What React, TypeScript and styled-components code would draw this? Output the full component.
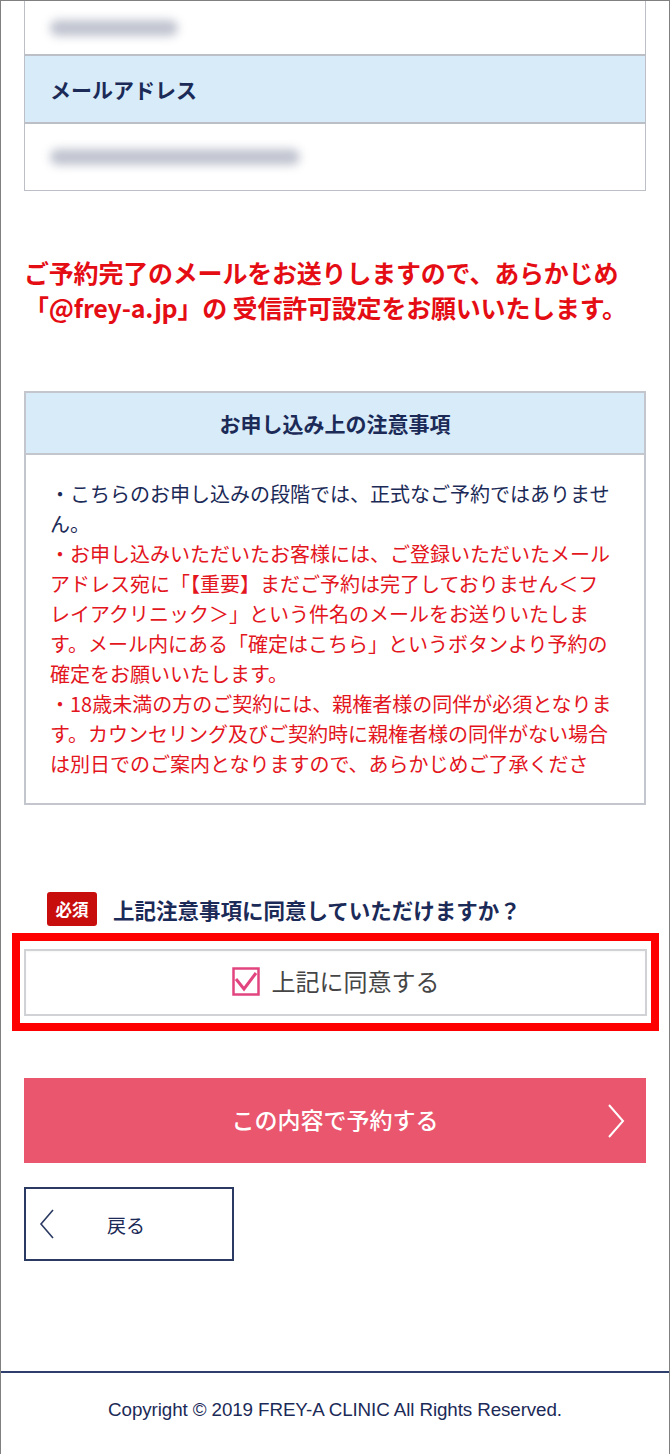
import React from "react";
import styled, { createGlobalStyle } from "styled-components";

const Global = createGlobalStyle`
  html, body { margin: 0; padding: 0; background: #fff; }
  body { font-family: "Noto Sans CJK JP", "Noto Sans", sans-serif; color: #1b2a57; }
  * { box-sizing: border-box; }
`;

const Frame = styled.div`
  width: 670px;
  min-height: 1454px;
  border: 1px solid #808080;
  display: flex;
  flex-direction: column;
`;

const Main = styled.main`
  padding: 0 23px;
  display: flex;
  flex-direction: column;
`;

const Table = styled.div`
  border: 1px solid #bcc0c6;
  border-top: none;
  display: flex;
  flex-direction: column;
`;

const Row = styled.div<{ $head?: boolean; $h: number; $last?: boolean }>`
  height: ${(p) => p.$h}px;
  display: flex;
  align-items: center;
  padding-left: 25px;
  background: ${(p) => (p.$head ? "#d7ecf8" : "#fff")};
  border-bottom: ${(p) => (p.$last ? "none" : "2px solid #bcc0c6")};
  font-size: 21px;
  font-weight: 700;
  color: #1b2a57;
`;

const Blur = styled.span<{ $w: number }>`
  display: inline-block;
  width: ${(p) => p.$w}px;
  height: 16px;
  border-radius: 8px;
  background: #b9bdca;
  filter: blur(5px);
  opacity: 0.9;
`;

const Alert = styled.p`
  margin: 64px 0 0;
  font-size: 25px;
  line-height: 35px;
  font-weight: 700;
  color: #e50d14;
  letter-spacing: -0.2px;
`;

const Notice = styled.section`
  margin-top: 66px;
  border: 2px solid #c3c6cc;
  display: flex;
  flex-direction: column;
`;

const NoticeHead = styled.h2`
  margin: 0;
  height: 62px;
  background: #d7ecf8;
  border-bottom: 2px solid #c3c6cc;
  display: flex;
  align-items: center;
  justify-content: center;
  font-size: 21px;
  font-weight: 700;
  color: #1b2a57;
`;

const NoticeBody = styled.div`
  height: 348px;
  overflow: hidden;
  padding: 24px 26px 0 24px;
  font-size: 20px;
  line-height: 30px;
`;

const Line = styled.p<{ $red?: boolean }>`
  margin: 0;
  color: ${(p) => (p.$red ? "#e3151d" : "#1b2a57")};
`;

const Question = styled.div`
  margin-top: 87px;
  padding-left: 23px;
  display: flex;
  align-items: center;
  gap: 16px;
`;

const Badge = styled.span`
  width: 50px;
  height: 34px;
  border-radius: 3px;
  background: #c80d0d;
  color: #fff;
  font-size: 16.5px;
  font-weight: 700;
  display: flex;
  align-items: center;
  justify-content: center;
`;

const QText = styled.span`
  font-size: 21.5px;
  font-weight: 700;
  color: #1b2a57;
`;

const Highlight = styled.div`
  margin: 7px -13px 0 -12px;
  padding: 8px 4px 7px 4px;
  border: 8px solid #ff0000;
`;

const AgreeBox = styled.label`
  height: 67px;
  border: 2px solid #d0d2d5;
  display: flex;
  align-items: center;
  justify-content: center;
  gap: 12px;
  padding-bottom: 4px;
  font-size: 24px;
  color: #454545;
  box-shadow: inset 0 1px 2px rgba(0, 0, 0, 0.04);
`;

const Submit = styled.button`
  margin-top: 47px;
  height: 85px;
  width: 100%;
  border: none;
  background: #e9566d;
  color: #fff;
  font-family: inherit;
  font-size: 23px;
  font-weight: 500;
  display: flex;
  align-items: center;
  justify-content: center;
  position: relative;
  padding: 0 0 3px;
`;

const ChevronRight = styled.svg`
  position: absolute;
  right: 21px;
  top: 50%;
  transform: translateY(-50%);
`;

const Back = styled.button`
  margin-top: 24px;
  width: 210px;
  height: 74px;
  border: 2px solid #2b3a63;
  background: #fff;
  color: #1b2a57;
  font-family: inherit;
  font-size: 19px;
  display: flex;
  align-items: center;
  padding: 0 0 0 13px;
  gap: 52px;
`;

const Footer = styled.footer`
  margin-top: 110px;
  border-top: 2px solid #2e3f6e;
  height: 83px;
  display: flex;
  align-items: center;
  justify-content: center;
  font-family: "Liberation Sans", Arial, sans-serif;
  font-size: 18.8px;
  letter-spacing: -0.1px;
  color: #1b2a57;
  padding-bottom: 8px;
`;

export default function App() {
  return (
    <>
      <Global />
      <Frame>
        <Main>
          <Table>
            <Row $h={55}>
              <Blur $w={128} />
            </Row>
            <Row $head $h={68}>メールアドレス</Row>
            <Row $h={66} $last>
              <Blur $w={250} />
            </Row>
          </Table>

          <Alert>
            ご予約完了のメールをお送りしますので、あらかじめ
            <br />
            「@frey-a.jp」の 受信許可設定をお願いいたします。
          </Alert>

          <Notice>
            <NoticeHead>お申し込み上の注意事項</NoticeHead>
            <NoticeBody>
              <Line>・こちらのお申し込みの段階では、正式なご予約ではありません。</Line>
              <Line $red>
                ・お申し込みいただいたお客様には、ご登録いただいたメールアドレス宛に「【重要】まだご予約は完了しておりません＜フレイアクリニック＞」という件名のメールをお送りいたします。メール内にある「確定はこちら」というボタンより予約の確定をお願いいたします。
              </Line>
              <Line $red>
                ・18歳未満の方のご契約には、親権者様の同伴が必須となります。カウンセリング及びご契約時に親権者様の同伴がない場合は別日でのご案内となりますので、あらかじめご了承くださ
              </Line>
            </NoticeBody>
          </Notice>

          <Question>
            <Badge>必須</Badge>
            <QText>上記注意事項に同意していただけますか？</QText>
          </Question>

          <Highlight>
            <AgreeBox>
              <svg width="28" height="30" viewBox="0 0 28 30" aria-hidden="true">
                <rect x="1.5" y="2.5" width="25" height="26" fill="#fff" stroke="#e2447f" strokeWidth="2.5" />
                <polyline points="4,13 12,23 24,7" fill="none" stroke="#e2447f" strokeWidth="3" strokeLinejoin="miter" />
              </svg>
              上記に同意する
            </AgreeBox>
          </Highlight>

          <Submit type="button">
            この内容で予約する
            <ChevronRight width="18" height="34" viewBox="0 0 18 34" aria-hidden="true">
              <polyline points="2,1 16,17 2,33" fill="none" stroke="#fff" strokeWidth="2" />
            </ChevronRight>
          </Submit>

          <Back type="button">
            <svg width="16" height="30" viewBox="0 0 16 30" aria-hidden="true">
              <polyline points="14,1 2,15 14,29" fill="none" stroke="#2b3a63" strokeWidth="1.6" />
            </svg>
            戻る
          </Back>
        </Main>
        <Footer>Copyright © 2019 FREY-A CLINIC All Rights Reserved.</Footer>
      </Frame>
    </>
  );
}
